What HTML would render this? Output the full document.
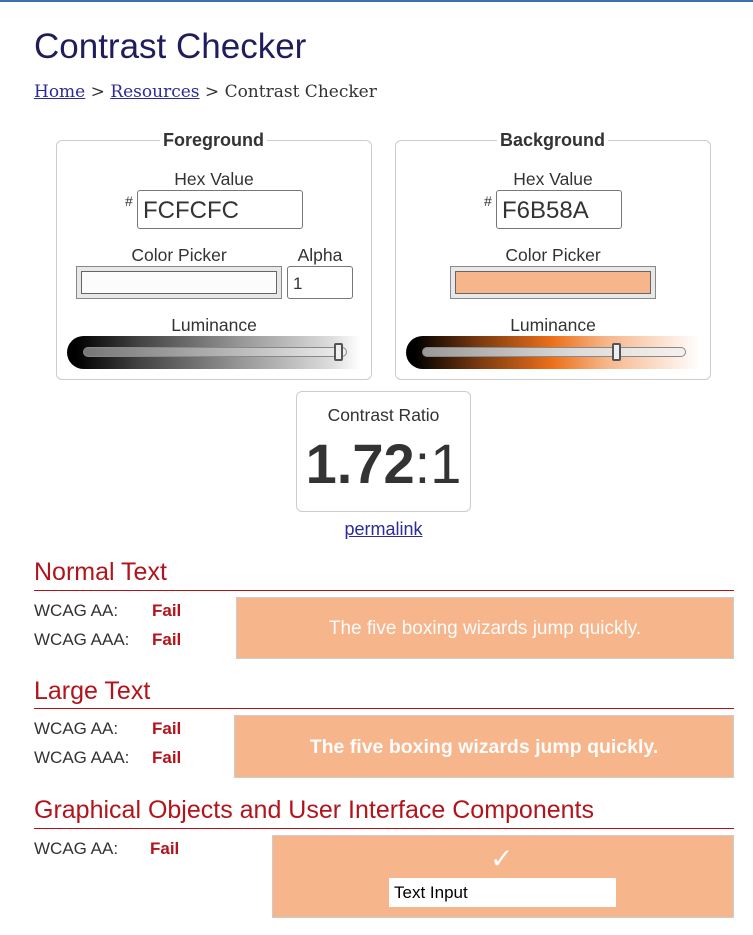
<!DOCTYPE html>
<html><head><style>
body{margin:0;width:753px;height:935px;background:#fff;font-family:"Liberation Sans",sans-serif;position:relative;overflow:hidden;color:#333}
.a{position:absolute}
.topbar{left:0;top:0;width:753px;height:2px;background:#3f6fae}
h1{position:absolute;left:34px;top:27px;margin:0;font-weight:normal;font-size:35px;color:#1f1d5c}
.bc{left:34px;top:82px;font-family:"DejaVu Serif",serif;font-size:17px;color:#333}
.bc u{color:#2b2b9a}
.box{border:1px solid #ccc;border-radius:6px}
.leg{background:#fff;font-weight:bold;font-size:18px;padding:0 3px;color:#333}
.lbl{font-size:17.5px;color:#333;text-align:center}
.inp{border:1px solid #777;border-radius:3px;background:#fff;font-size:24px;padding-left:5px;box-sizing:border-box;color:#333}
.track{height:10px;border-radius:5px;border:1px solid #888;box-sizing:border-box}
.thumb{width:9px;height:18px;border:2px solid #555;border-radius:2px;background:#eee;box-sizing:border-box}
.sec{font-size:25px;color:#b3141c;left:34px}
.hr{left:34px;width:700px;height:1px;background:#b3141c}
.w{font-size:17px;color:#333;left:34px}
.f{font-size:17px;font-weight:bold;color:#b3141c}
.sample{background:#f6b58a;border:1px solid #ccc;color:#fcfcfc;text-align:center;box-sizing:border-box}
</style></head><body>
<div class="a topbar"></div>
<h1>Contrast Checker</h1>
<div class="a bc"><u>Home</u> &gt; <u>Resources</u> &gt; Contrast Checker</div>

<div class="a box" style="left:56px;top:140px;width:314px;height:238px"></div>
<div class="a leg" style="left:160px;top:130px">Foreground</div>
<div class="a lbl" style="left:56px;top:169px;width:316px">Hex Value</div>
<div class="a" style="left:125px;top:193px;font-size:14px">#</div>
<div class="a inp" style="left:137px;top:190px;width:166px;height:39px;line-height:39px">FCFCFC</div>
<div class="a lbl" style="left:76px;top:245px;width:206px">Color Picker</div>
<div class="a lbl" style="left:287px;top:245px;width:66px">Alpha</div>
<div class="a" style="left:76px;top:266px;width:206px;height:33px;border:1px solid #888;background:#e8e8e8;box-sizing:border-box;padding:4px"><div style="height:100%;background:#fcfcfc;border:1px solid #666;box-sizing:border-box"></div></div>
<div class="a inp" style="left:287px;top:266px;width:66px;height:33px;line-height:33px;font-size:17px">1</div>
<div class="a lbl" style="left:56px;top:315px;width:316px">Luminance</div>
<div class="a" style="left:67px;top:336px;width:294px;height:33px;border-radius:17px 0 0 17px;background:linear-gradient(90deg,#000 3%,#444 25%,#999 60%,#ddd 90%,#fff)"></div>
<div class="a track" style="left:83px;top:347px;width:264px;background:linear-gradient(90deg,#777,#bbb 60%,#eee)"></div>
<div class="a thumb" style="left:334px;top:343px"></div>

<div class="a box" style="left:395px;top:140px;width:314px;height:238px"></div>
<div class="a leg" style="left:497px;top:130px">Background</div>
<div class="a lbl" style="left:395px;top:169px;width:316px">Hex Value</div>
<div class="a" style="left:484px;top:193px;font-size:14px">#</div>
<div class="a inp" style="left:496px;top:190px;width:126px;height:39px;line-height:39px">F6B58A</div>
<div class="a lbl" style="left:395px;top:245px;width:316px">Color Picker</div>
<div class="a" style="left:450px;top:266px;width:206px;height:33px;border:1px solid #888;background:#e8e8e8;box-sizing:border-box;padding:4px"><div style="height:100%;background:#f6b58a;border:1px solid #666;box-sizing:border-box"></div></div>
<div class="a lbl" style="left:395px;top:315px;width:316px">Luminance</div>
<div class="a" style="left:406px;top:336px;width:294px;height:33px;border-radius:17px 0 0 17px;background:linear-gradient(90deg,#000 3%,#7a3a10 25%,#ee7019 50%,#f6b58a 68%,#fff 100%)"></div>
<div class="a track" style="left:422px;top:347px;width:264px;background:linear-gradient(90deg,#999,#ddd 60%,#f6f0ec)"></div>
<div class="a thumb" style="left:612px;top:343px"></div>

<div class="a box" style="left:296px;top:391px;width:173px;height:119px"></div>
<div class="a lbl" style="left:296px;top:405px;width:175px">Contrast Ratio</div>
<div class="a" style="left:296px;top:432px;width:175px;text-align:center;font-size:56px;line-height:64px;color:#333"><b>1.72</b>:1</div>
<div class="a" style="left:296px;top:519px;width:175px;text-align:center;font-size:18px;color:#2b2b9a;text-decoration:underline">permalink</div>

<div class="a sec" style="top:558px">Normal Text</div>
<div class="a hr" style="top:590px"></div>
<div class="a w" style="top:601px">WCAG AA:</div><div class="a f" style="left:152px;top:601px">Fail</div>
<div class="a w" style="top:630px">WCAG AAA:</div><div class="a f" style="left:152px;top:630px">Fail</div>
<div class="a sample" style="left:236px;top:597px;width:498px;height:62px;line-height:62px;font-size:19px">The five boxing wizards jump quickly.</div>

<div class="a sec" style="top:677px">Large Text</div>
<div class="a hr" style="top:708px"></div>
<div class="a w" style="top:719px">WCAG AA:</div><div class="a f" style="left:152px;top:719px">Fail</div>
<div class="a w" style="top:748px">WCAG AAA:</div><div class="a f" style="left:152px;top:748px">Fail</div>
<div class="a sample" style="left:234px;top:715px;width:500px;height:63px;line-height:63px;font-size:19.5px;font-weight:bold">The five boxing wizards jump quickly.</div>

<div class="a sec" style="top:796px">Graphical Objects and User Interface Components</div>
<div class="a hr" style="top:828px"></div>
<div class="a w" style="top:839px">WCAG AA:</div><div class="a f" style="left:150px;top:839px">Fail</div>
<div class="a sample" style="left:272px;top:835px;width:462px;height:83px"></div>
<div class="a" style="left:490px;top:842px;font-size:28px;color:#fcfcfc">✓</div>
<div class="a" style="left:389px;top:878px;width:227px;height:29px;background:#fff;font-size:17px;color:#000;line-height:29px;padding-left:5px;box-sizing:border-box">Text Input</div>
</body></html>
